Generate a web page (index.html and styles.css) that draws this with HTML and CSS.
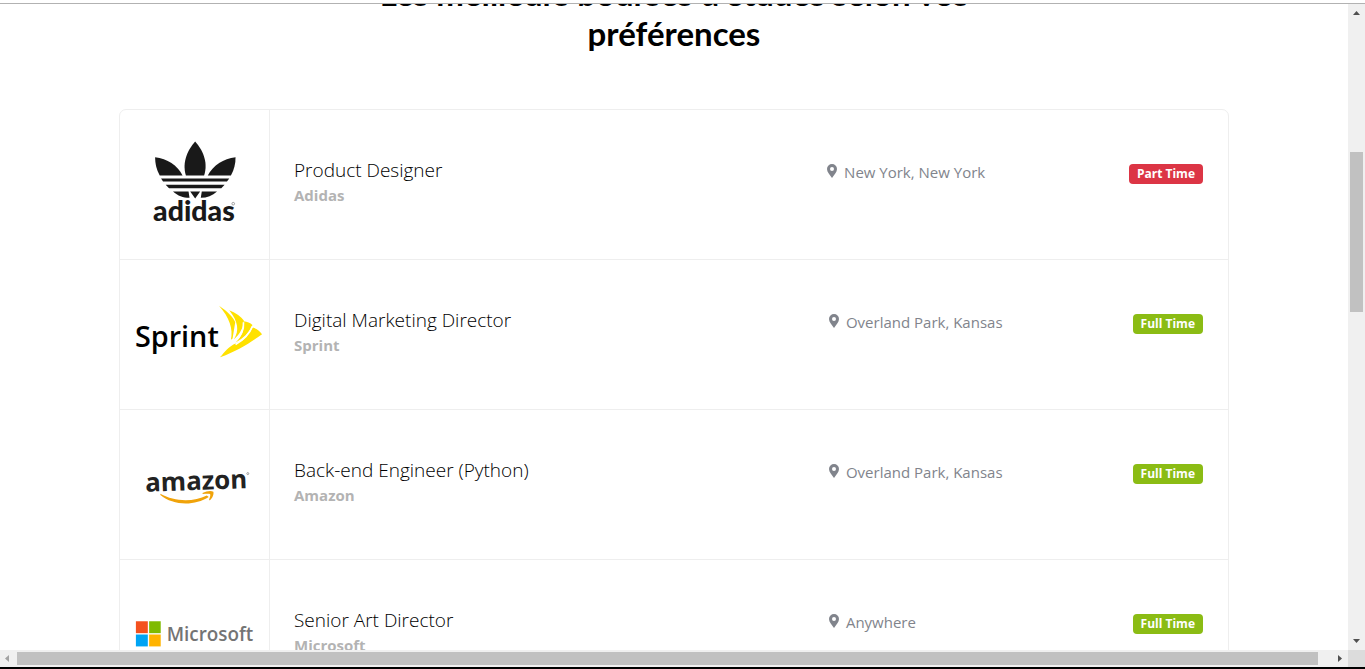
FILE: index.html
```html
<!DOCTYPE html>
<html lang="fr">
<head>
<meta charset="utf-8">
<title>Bourses d'études</title>
<link rel="stylesheet" href="styles.css">
</head>
<body>
<div class="window">
  <div class="window-top"></div>
  <div class="window-body">
    <main class="page">
      <div class="container">
        <h2 class="heading">Les meilleurs bourses d'études selon vos préférences</h2>
        <ul class="jobs">
          <li class="job">
            <div class="job-logo">
              <svg class="logo" viewBox="15 15 450 450" role="img" aria-label="adidas">
                <g fill="#191919">
                  <path d="M242 110C262 132 283 170 269 213H214C201 170 222 132 242 110Z"/>
                  <path d="M121 158C158 162 188 182 204 213H135C125 195 121 178 121 158Z"/>
                  <path d="M364 158C327 162 297 182 280 213H350C360 195 364 178 364 158Z"/>
                  <path d="M139 222H345L338 231H145ZM153 241H331L321 251H163Z"/>
                  <path d="M175 261H222L225 280C205 280 190 274 175 261ZM308 261H262L259 280C278 280 294 274 308 261ZM227 261H257L242 282Z"/>
                </g>
                <text class="adidas-word" x="115" y="350">adidas</text>
                <circle cx="357" cy="298" r="4" fill="none" stroke="#777" stroke-width="2"/>
              </svg>
            </div>
            <div class="job-about">
              <div class="job-position"><h3 class="job-title">Product Designer</h3><strong class="job-company">Adidas</strong></div>
              <div class="job-location"><svg class="pin" viewBox="0 0 10 14" aria-hidden="true"><path fill-rule="evenodd" d="M5 0A5 5 0 0 1 10 5C10 8 7.500 10.500 5 14C2.500 10.500 0 8 0 5A5 5 0 0 1 5 0ZM5 3A2 2 0 1 0 5 7A2 2 0 0 0 5 3Z"/></svg>New York, New York</div>
              <span class="badge badge-part">Part Time</span>
            </div>
          </li>
          <li class="job">
            <div class="job-logo">
              <svg class="logo" viewBox="15 -90 450 450" role="img" aria-label="Sprint">
                <text class="sprint-word" x="60" y="173">Sprint</text>
                <g fill="#ffe100">
                  <path d="M314 48C340 65 358 84 363 98L355 147L350 151C357 118 346 84 314 48Z"/>
                  <path d="M345 62C366 71 381 81 389 93C388 114 377 134 359 150C376 124 372 96 345 62Z"/>
                  <path d="M388 95C400 97 408 100 415 106C406 128 388 146 364 159C383 141 391 121 388 95Z"/>
                  <path d="M416 114C428 117 437 124 444 134C411 158 367 186 317 204C348 181 393 157 416 114Z"/>
                </g>
                <path fill="#ffe100" d="M317 204C330 188 346 169 364 162L386 152L370 176Z"/>
                <path d="M388 98C390 124 376 145 360 158M415 110C406 134 387 152 364 165" fill="none" stroke="#fff" stroke-width="5"/>
              </svg>
            </div>
            <div class="job-about">
              <div class="job-position"><h3 class="job-title">Digital Marketing Director</h3><strong class="job-company">Sprint</strong></div>
              <div class="job-location"><svg class="pin" viewBox="0 0 10 14" aria-hidden="true"><path fill-rule="evenodd" d="M5 0A5 5 0 0 1 10 5C10 8 7.500 10.500 5 14C2.500 10.500 0 8 0 5A5 5 0 0 1 5 0ZM5 3A2 2 0 1 0 5 7A2 2 0 0 0 5 3Z"/></svg>Overland Park, Kansas</div>
              <span class="badge badge-full">Full Time</span>
            </div>
          </li>
          <li class="job">
            <div class="job-logo">
              <svg class="logo" viewBox="15 -120 450 450" role="img" aria-label="amazon">
                <text class="amazon-word" x="92" y="127" transform="rotate(-2 92 127)">amazon</text>
                <circle cx="401" cy="72" r="3" fill="none" stroke="#777" stroke-width="2"/>
                <path fill="#f0a30a" d="M137 133C180 158 238 158 277 138L283 143C240 171 175 169 137 137Z"/>
                <path fill="#f0a30a" d="M264 131C277 124 291 123 297 127C299 135 294 147 286 153L284 150C287 143 289 138 287 134C282 132 274 133 265 134Z"/>
              </svg>
            </div>
            <div class="job-about">
              <div class="job-position"><h3 class="job-title">Back-end Engineer (Python)</h3><strong class="job-company">Amazon</strong></div>
              <div class="job-location"><svg class="pin" viewBox="0 0 10 14" aria-hidden="true"><path fill-rule="evenodd" d="M5 0A5 5 0 0 1 10 5C10 8 7.500 10.500 5 14C2.500 10.500 0 8 0 5A5 5 0 0 1 5 0ZM5 3A2 2 0 1 0 5 7A2 2 0 0 0 5 3Z"/></svg>Overland Park, Kansas</div>
              <span class="badge badge-full">Full Time</span>
            </div>
          </li>
          <li class="job">
            <div class="job-logo">
              <svg class="logo" viewBox="15 -120 450 450" role="img" aria-label="Microsoft">
                <path fill="#f4511e" d="M63 65H99V101H63Z"/>
                <path fill="#7fba00" d="M103 65H138V101H103Z"/>
                <path fill="#00a4f4" d="M63 105H99V141H63Z"/>
                <path fill="#ffb300" d="M103 105H138V141H103Z"/>
                <text class="microsoft-word" x="156" y="126">Microsoft</text>
              </svg>
            </div>
            <div class="job-about">
              <div class="job-position"><h3 class="job-title">Senior Art Director</h3><strong class="job-company">Microsoft</strong></div>
              <div class="job-location"><svg class="pin" viewBox="0 0 10 14" aria-hidden="true"><path fill-rule="evenodd" d="M5 0A5 5 0 0 1 10 5C10 8 7.500 10.500 5 14C2.500 10.500 0 8 0 5A5 5 0 0 1 5 0ZM5 3A2 2 0 1 0 5 7A2 2 0 0 0 5 3Z"/></svg>Anywhere</div>
              <span class="badge badge-full">Full Time</span>
            </div>
          </li>
        </ul>
      </div>
    </main>
    <div class="bar bar-vertical">
      <svg class="arrow" viewBox="0 0 17 17" aria-hidden="true"><path d="M5 11L8.500 7L12 11Z"/></svg>
      <div class="track track-vertical"><div class="thumb"></div></div>
      <svg class="arrow" viewBox="0 0 17 17" aria-hidden="true"><path d="M5 6L8.500 10L12 6Z"/></svg>
    </div>
    <div class="bar bar-horizontal">
      <svg class="arrow arrow-off" viewBox="0 0 17 17" aria-hidden="true"><path d="M9 5L5 8.500L9 12Z"/></svg>
      <div class="track track-horizontal"><div class="thumb"></div></div>
      <svg class="arrow" viewBox="0 0 17 17" aria-hidden="true"><path d="M7 5L11 8.500L7 12Z"/></svg>
    </div>
    <div class="corner"></div>
  </div>
  <div class="window-bottom"></div>
</div>
</body>
</html>
```

FILE: styles.css
```css
* { box-sizing: border-box; }
body {
  margin: 0;
  background: #fff;
  color: #000;
  font-family: "Open Sans", "Noto Sans", sans-serif;
}
.window { display: flex; flex-direction: column; height: 100vh; }
.window-top { height: 4px; flex: none; border-bottom: 1px solid #b2b2b2; }
.window-bottom { height: 2px; flex: none; background: #000; }
.window-body {
  flex: 1;
  min-height: 0;
  display: grid;
  grid-template-columns: minmax(0, 1fr) 17px;
  grid-template-rows: minmax(0, 1fr) 17px;
}
.page { overflow: hidden; }
.container { max-width: 1140px; margin: -31px auto 0; padding: 0 15px; }
.heading {
  max-width: 640px;
  margin: 0 auto 56px;
  font-family: Lato, sans-serif;
  font-size: 33px;
  line-height: 40px;
  font-weight: 700;
  text-align: center;
}
.jobs { list-style: none; margin: 0; padding: 0; border: 1px solid #eee; border-radius: 7px; }
.job { display: flex; min-height: 150px; border-bottom: 1px solid #eee; }
.job:last-child { border-bottom: 0; }
.job-logo { flex: none; width: 150px; border-right: 1px solid #eee; }
.logo { display: block; width: 149px; height: 149px; }
.job-about { flex: 1; display: flex; justify-content: space-between; align-items: flex-start; padding: 48px 25px 24px 24px; }
.job-position { width: 50%; }
.job-title { margin: 0; font-size: 19px; line-height: 24px; font-weight: 300; }
.job-company { display: block; color: #b3b3b3; font-size: 15px; line-height: 26px; font-weight: 700; }
.job-location { display: flex; align-items: center; gap: 7px; width: 25%; padding-left: 2px; color: #81848c; font-size: 15px; line-height: 28px; }
.pin { width: 10px; height: 14px; margin-bottom: 2px; fill: #81848c; }
.badge { margin-top: 6px; padding: 0 8px; border-radius: 4px; color: #fff; font-size: 12px; line-height: 20px; font-weight: 700; white-space: nowrap; }
.badge-part { background: #dc3545; }
.badge-full { background: #8bbc14; }
.adidas-word { font-family: Lato, sans-serif; font-weight: 900; font-size: 86px; fill: #191919; }
.sprint-word { font-family: "Open Sans", sans-serif; font-weight: 600; font-size: 87px; fill: #000; }
.amazon-word { font-family: "Open Sans", sans-serif; font-weight: 700; font-size: 78px; fill: #222; }
.microsoft-word { font-family: "Open Sans", sans-serif; font-weight: 600; font-size: 57px; fill: #747474; }
.bar { display: flex; background: #f0f0f0; }
.bar-vertical { flex-direction: column; }
.arrow { flex: none; width: 17px; height: 17px; fill: #505050; }
.arrow-off { fill: #a3a3a3; }
.track { flex: 1; display: grid; }
.track-vertical { grid-template-rows: 131fr 160fr 321fr; padding: 0 2px; }
.track-vertical .thumb { grid-row: 2; }
.track-horizontal { grid-template-columns: 1301fr 13fr; padding: 2px 0; }
.thumb { background: #c1c1c1; }
.corner { background: #dcdcdc; }
```
